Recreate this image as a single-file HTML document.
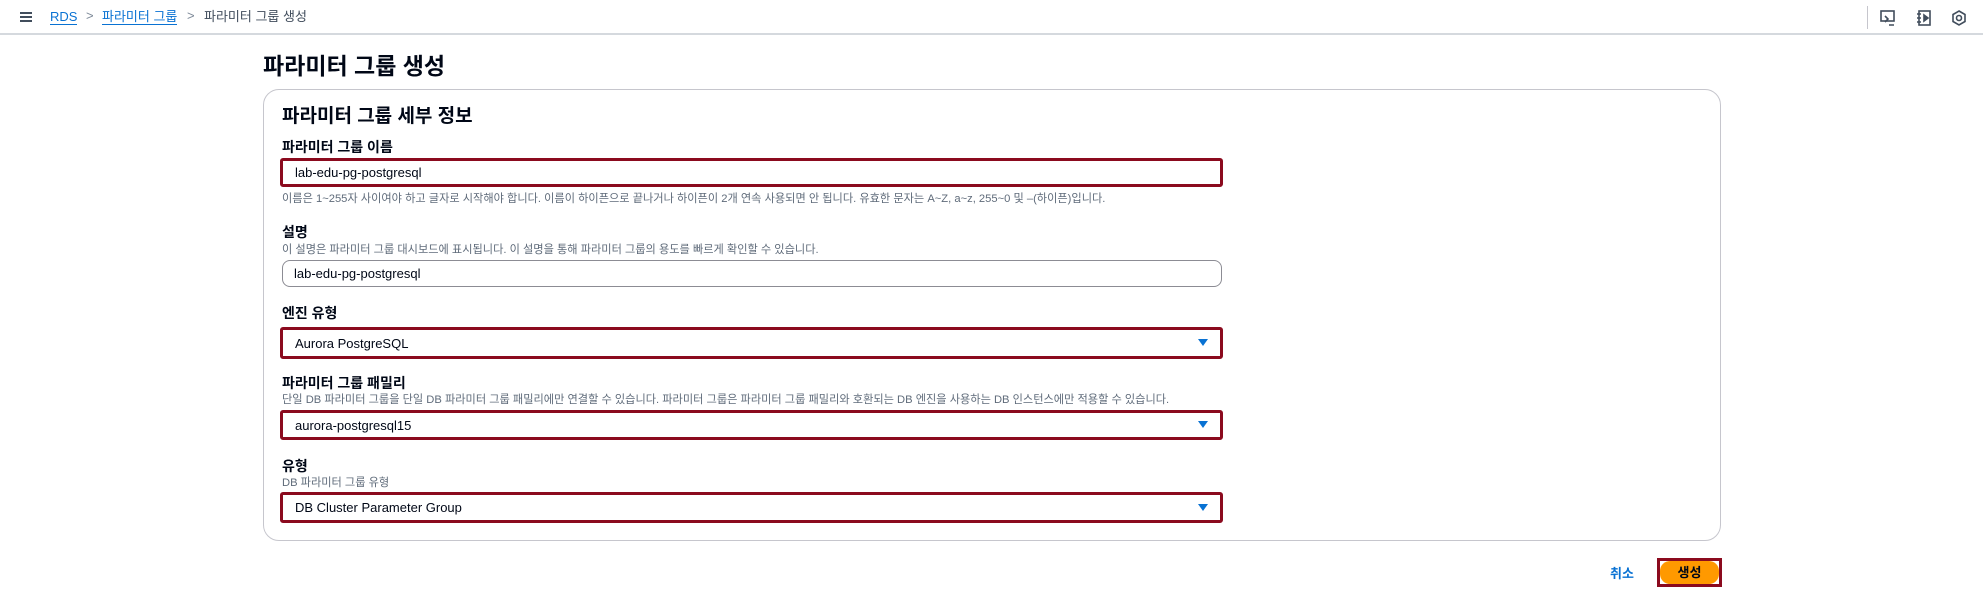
<!DOCTYPE html>
<html><head><meta charset="utf-8"><style>
*{box-sizing:border-box;margin:0;padding:0}
body{width:1983px;height:602px;background:#fff;position:relative;overflow:hidden;font-family:"Liberation Sans","Noto Sans CJK KR",sans-serif;color:#000716}
.a{position:absolute;white-space:nowrap}
.lbl{font-size:14px;font-weight:bold;color:#000716}
.hint{font-size:11.2px;color:#5f6b7a}
.inp{position:absolute;left:280px;width:943px;border:3px solid #8b0a1e;border-radius:3px;font-size:13px;padding-left:12px;display:flex;align-items:center;background:#fff}
.arr{position:absolute;right:12px;top:50%;margin-top:-4px;width:0;height:0;border-left:5px solid transparent;border-right:5px solid transparent;border-top:7px solid #0972d3}
</style></head><body>
<div class="a" style="left:0;top:0;width:1983px;height:35px;border-bottom:2px solid #d5d9de"></div>
<div class="a" style="left:20px;top:12px;width:12px;height:2px;background:#414d5c;box-shadow:0 4px 0 #414d5c,0 8px 0 #414d5c"></div>
<div class="a" style="left:50px;top:9px;font-size:13px;color:#0972d3;border-bottom:1px solid #0972d3;line-height:15px">RDS</div>
<div class="a" style="left:86px;top:8px;font-size:13px;color:#7d8998">&gt;</div>
<div class="a" style="left:102px;top:9px;font-size:13px;color:#0972d3;border-bottom:1px solid #0972d3;line-height:15px">파라미터 그룹</div>
<div class="a" style="left:187px;top:8px;font-size:13px;color:#7d8998">&gt;</div>
<div class="a" style="left:204px;top:9px;font-size:13px;color:#414d5c;line-height:15px">파라미터 그룹 생성</div>
<div class="a" style="left:1867px;top:6px;width:1px;height:23px;background:#c6c6cd"></div>
<svg class="a" style="left:1880px;top:10px" width="16" height="16" viewBox="0 0 16 16" fill="none" stroke="#414d5c" stroke-width="1.6"><rect x="1" y="1" width="13" height="10"/><path d="M5 6l3 3-3 3M9 15h5"/></svg>
<svg class="a" style="left:1916px;top:10px" width="16" height="16" viewBox="0 0 16 16" fill="none" stroke="#414d5c" stroke-width="1.6"><rect x="3" y="1" width="11" height="14"/><path d="M1 4h4M1 8h4M1 12h4"/><path d="M8 5l4 3-4 3z" fill="#414d5c"/></svg>
<svg class="a" style="left:1951px;top:10px" width="16" height="16" viewBox="0 0 16 16" fill="none" stroke="#414d5c" stroke-width="1.6"><path d="M8 1l6 3.5v7L8 15l-6-3.5v-7z"/><circle cx="8" cy="8" r="2.5"/></svg>

<div class="a" style="left:263px;top:47px;font-size:23px;font-weight:bold">파라미터 그룹 생성</div>
<div class="a" style="left:263px;top:89px;width:1458px;height:452px;border:1px solid #c6c6cd;border-radius:16px"></div>
<div class="a" style="left:282px;top:101px;font-size:19px;font-weight:bold">파라미터 그룹 세부 정보</div>

<div class="a lbl" style="left:282px;top:137px">파라미터 그룹 이름</div>
<div class="inp" style="top:158px;height:29px">lab-edu-pg-postgresql</div>
<div class="a hint" style="left:282px;top:190px">이름은 1~255자 사이여야 하고 글자로 시작해야 합니다. 이름이 하이픈으로 끝나거나 하이픈이 2개 연속 사용되면 안 됩니다. 유효한 문자는 A~Z, a~z, 255~0 및 –(하이픈)입니다.</div>

<div class="a lbl" style="left:282px;top:222px">설명</div>
<div class="a hint" style="left:282px;top:241px">이 설명은 파라미터 그룹 대시보드에 표시됩니다. 이 설명을 통해 파라미터 그룹의 용도를 빠르게 확인할 수 있습니다.</div>
<div class="inp" style="top:260px;height:27px;border:1px solid #8c8c94;border-radius:8px;left:282px;width:940px;padding-left:11px">lab-edu-pg-postgresql</div>

<div class="a lbl" style="left:282px;top:303px">엔진 유형</div>
<div class="inp" style="top:327px;height:32px">Aurora PostgreSQL<div class="arr"></div></div>

<div class="a lbl" style="left:282px;top:373px">파라미터 그룹 패밀리</div>
<div class="a hint" style="left:282px;top:391px">단일 DB 파라미터 그룹을 단일 DB 파라미터 그룹 패밀리에만 연결할 수 있습니다. 파라미터 그룹은 파라미터 그룹 패밀리와 호환되는 DB 엔진을 사용하는 DB 인스턴스에만 적용할 수 있습니다.</div>
<div class="inp" style="top:410px;height:30px">aurora-postgresql15<div class="arr"></div></div>

<div class="a lbl" style="left:282px;top:456px">유형</div>
<div class="a hint" style="left:282px;top:474px">DB 파라미터 그룹 유형</div>
<div class="inp" style="top:492px;height:31px">DB Cluster Parameter Group<div class="arr"></div></div>

<div class="a" style="left:1610px;top:563px;font-size:13px;font-weight:bold;color:#0972d3">취소</div>
<div class="a" style="left:1657px;top:558px;width:65px;height:29px;border:3px solid #8b0a1e;background:#fff"></div>
<div class="a" style="left:1660px;top:561px;width:59px;height:23px;background:#ff9900;border-radius:10px;font-size:13px;font-weight:bold;text-align:center;line-height:23px">생성</div>
</body></html>
